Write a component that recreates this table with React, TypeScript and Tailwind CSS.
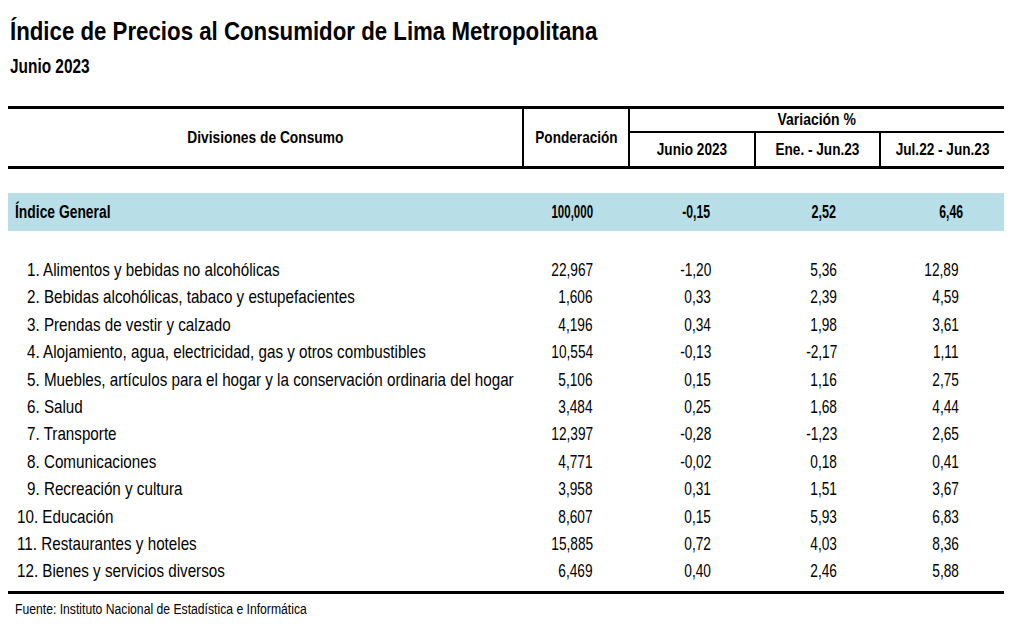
const rows: [string, string, string, string, string][] = [
  ["1. Alimentos y bebidas no alcohólicas", "22,967", "-1,20", "5,36", "12,89"],
  ["2. Bebidas alcohólicas, tabaco y estupefacientes", "1,606", "0,33", "2,39", "4,59"],
  ["3. Prendas de vestir y calzado", "4,196", "0,34", "1,98", "3,61"],
  ["4. Alojamiento, agua, electricidad, gas y otros combustibles", "10,554", "-0,13", "-2,17", "1,11"],
  ["5. Muebles, artículos para el hogar y la conservación ordinaria del hogar", "5,106", "0,15", "1,16", "2,75"],
  ["6. Salud", "3,484", "0,25", "1,68", "4,44"],
  ["7. Transporte", "12,397", "-0,28", "-1,23", "2,65"],
  ["8. Comunicaciones", "4,771", "-0,02", "0,18", "0,41"],
  ["9. Recreación y cultura", "3,958", "0,31", "1,51", "3,67"],
  ["10. Educación", "8,607", "0,15", "5,93", "6,83"],
  ["11. Restaurantes y hoteles", "15,885", "0,72", "4,03", "8,36"],
  ["12. Bienes y servicios diversos", "6,469", "0,40", "2,46", "5,88"],
];

const font = { fontFamily: '"Liberation Sans Narrow", "Liberation Sans", Arial, sans-serif' };

// narrow text: no condensed face installed, so squeeze the glyphs horizontally
const Sq = ({ className, children }: { className: string; children: React.ReactNode }) => (
  <span className={"inline-block whitespace-nowrap " + className}>{children}</span>
);

const cols = "grid grid-cols-[516px_106px_127px_125px_122px] items-center";

export default function App() {
  return (
    <div className="w-[1024px] h-[638px] bg-white text-black overflow-hidden" style={font}>
      <div className="pl-[10px] pt-[15px]">
        <h1 className="text-[25px] leading-[32px] font-bold">
          <Sq className="origin-left scale-x-[0.89]">Índice de Precios al Consumidor de Lima Metropolitana</Sq>
        </h1>
        <p className="text-[20px] leading-[24px] font-bold mt-[7px]">
          <Sq className="origin-left scale-x-[0.77]">Junio 2023</Sq>
        </p>
      </div>

      <div className="ml-[8px] w-[996px] mt-[28px]">
        {/* header */}
        <div className="grid grid-cols-[516px_106px_374px] border-t-[3px] border-b-[3px] border-black h-[63px] font-bold text-[17px]">
          <div className="flex items-center justify-center border-r-2 border-black">
            <Sq className="scale-x-[0.81]">Divisiones de Consumo</Sq>
          </div>
          <div className="flex items-center justify-center border-r-2 border-black">
            <Sq className="scale-x-[0.8]">Ponderación</Sq>
          </div>
          <div className="flex flex-col">
            <div className="h-[24px] flex items-center justify-center border-b-2 border-black">
              <Sq className="scale-x-[0.82]">Variación %</Sq>
            </div>
            <div className="flex-1 grid grid-cols-[126px_125px_123px]">
              <div className="flex items-center justify-center border-r-2 border-black">
                <Sq className="scale-x-[0.8]">Junio 2023</Sq>
              </div>
              <div className="flex items-center justify-center border-r-2 border-black">
                <Sq className="scale-x-[0.8]">Ene. - Jun.23</Sq>
              </div>
              <div className="flex items-center justify-center">
                <Sq className="scale-x-[0.8]">Jul.22 - Jun.23</Sq>
              </div>
            </div>
          </div>
        </div>

        {/* general */}
        <div className={"mt-[24px] h-[38px] bg-[#b8dee7] font-bold text-[18px] " + cols}>
          <div className="pl-[7px]">
            <Sq className="origin-left scale-x-[0.77]">Índice General</Sq>
          </div>
          <div className="text-right pr-[37px]">
            <Sq className="origin-right scale-x-[0.64]">100,000</Sq>
          </div>
          <div className="text-right pr-[47px]">
            <Sq className="origin-right scale-x-[0.68]">-0,15</Sq>
          </div>
          <div className="text-right pr-[46px]">
            <Sq className="origin-right scale-x-[0.7]">2,52</Sq>
          </div>
          <div className="text-right pr-[41px]">
            <Sq className="origin-right scale-x-[0.68]">6,46</Sq>
          </div>
        </div>

        {/* data */}
        <div className="mt-[25px] border-b-[3px] border-black pb-[6px]">
          {rows.map((r, i) => (
            <div key={r[0]} className={"h-[27.4px] text-[19px] " + cols}>
              <div className={i < 9 ? "pl-[19px]" : "pl-[9px]"}>
                <Sq className="origin-left scale-x-[0.8]">{r[0]}</Sq>
              </div>
              <div className="text-right pr-[37px]">
                <Sq className="origin-right scale-x-[0.72]">{r[1]}</Sq>
              </div>
              <div className="text-right pr-[46px]">
                <Sq className="origin-right scale-x-[0.72]">{r[2]}</Sq>
              </div>
              <div className="text-right pr-[45px]">
                <Sq className="origin-right scale-x-[0.72]">{r[3]}</Sq>
              </div>
              <div className="text-right pr-[45px]">
                <Sq className="origin-right scale-x-[0.72]">{r[4]}</Sq>
              </div>
            </div>
          ))}
        </div>
        <p className="pl-[7px] mt-[6px] text-[14px] leading-[18px]">
          <Sq className="origin-left scale-x-[0.87]">Fuente: Instituto Nacional de Estadística e Informática</Sq>
        </p>
      </div>
    </div>
  );
}
